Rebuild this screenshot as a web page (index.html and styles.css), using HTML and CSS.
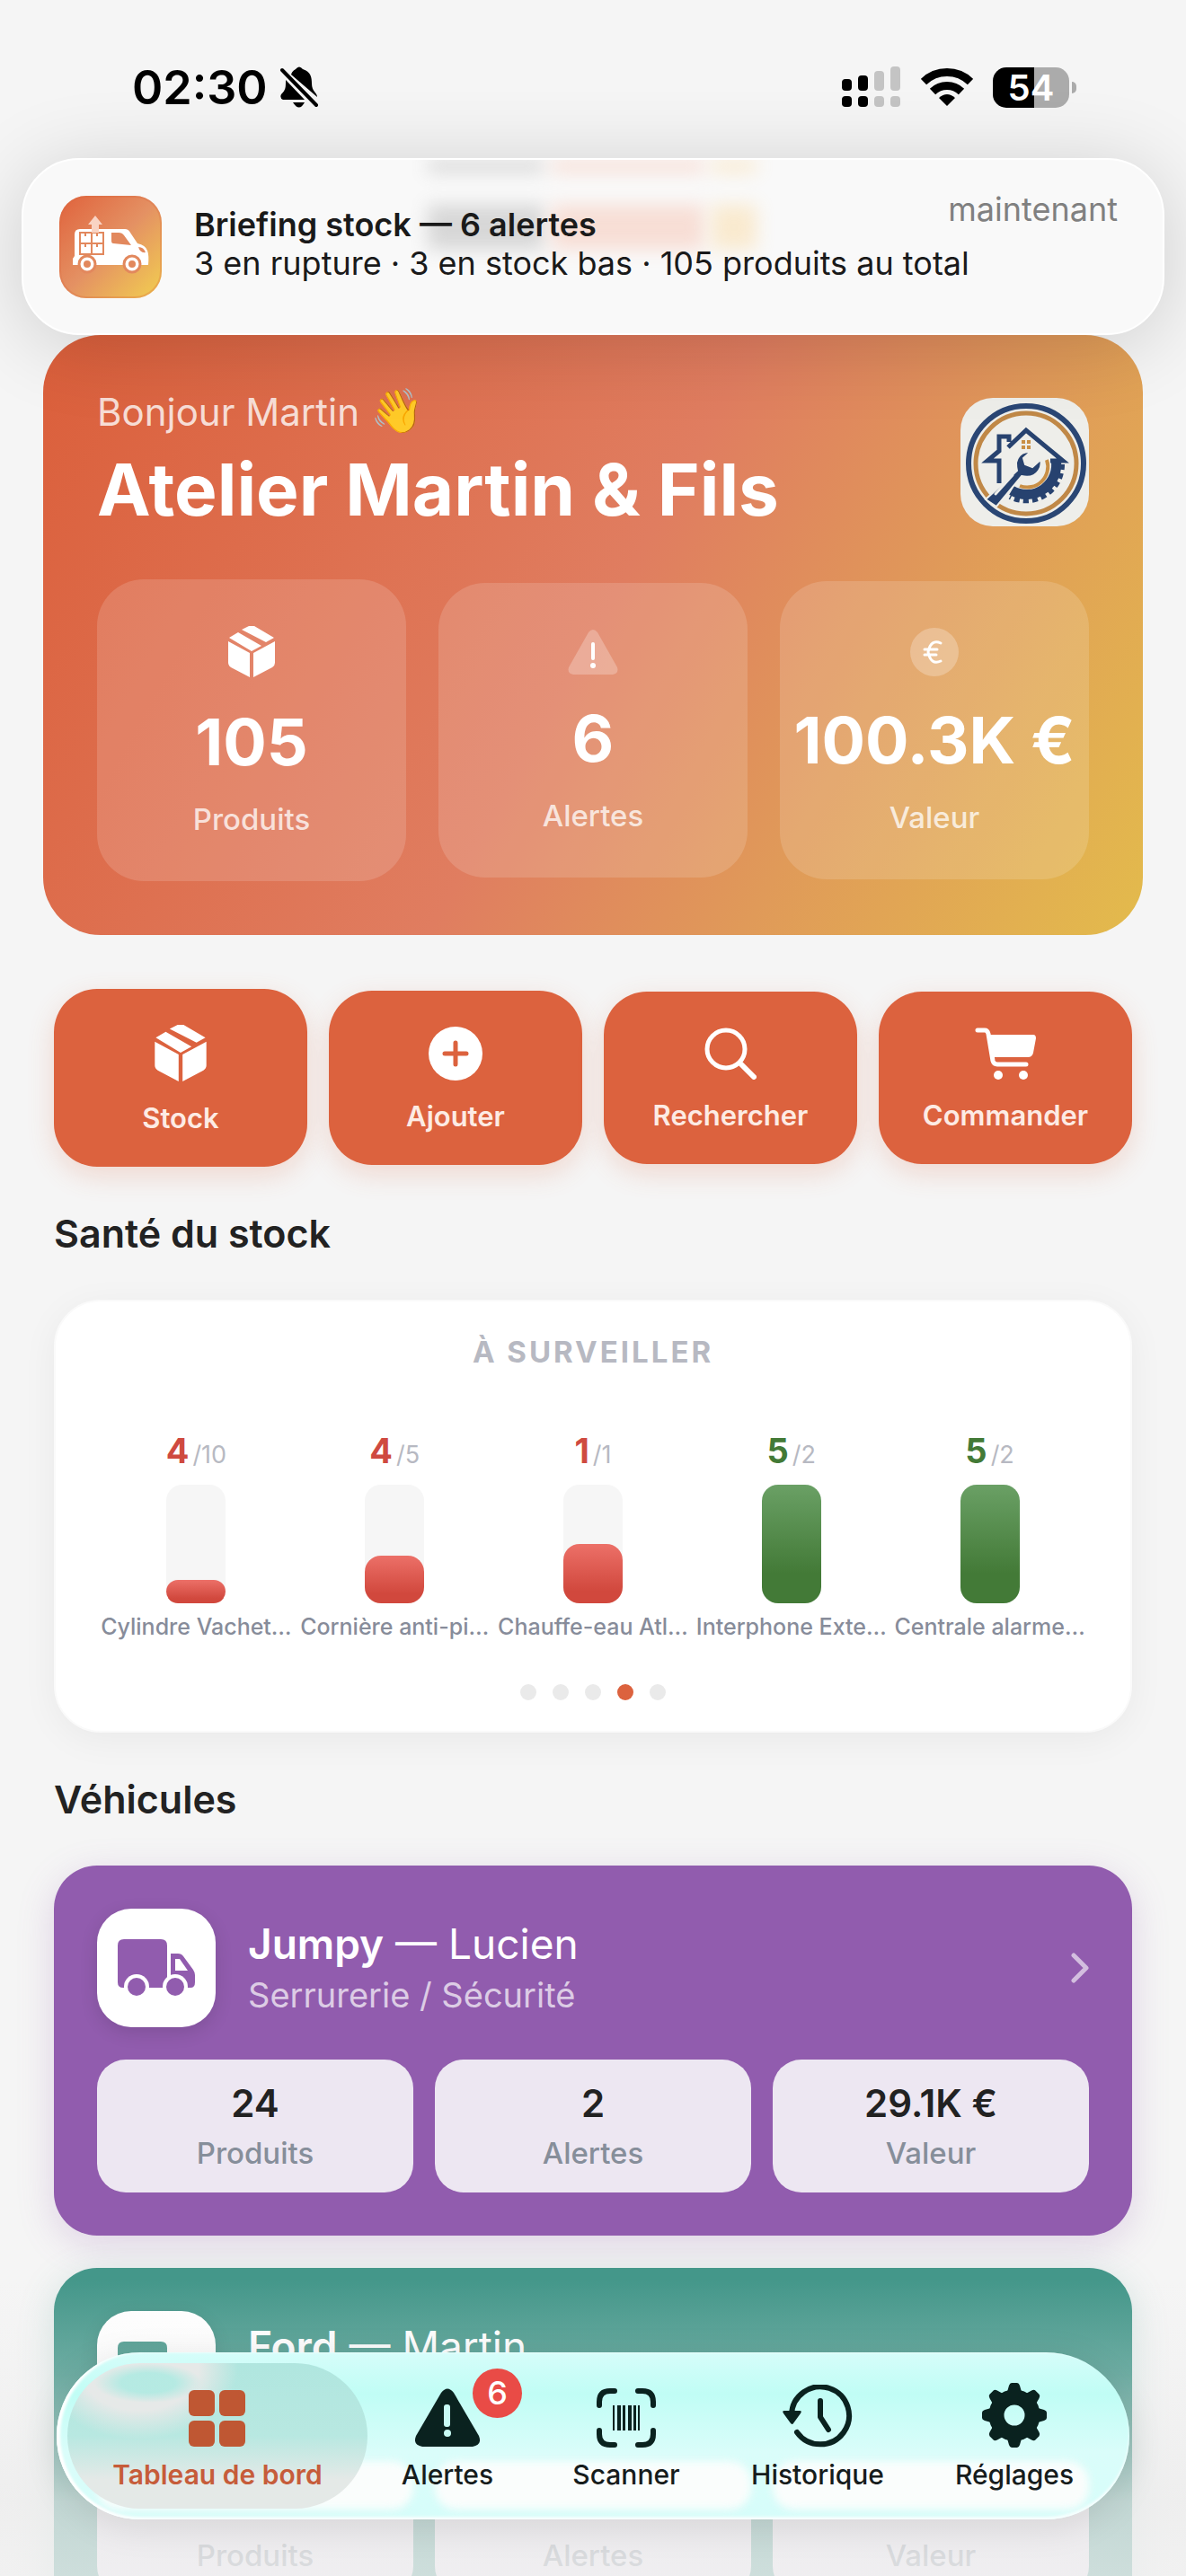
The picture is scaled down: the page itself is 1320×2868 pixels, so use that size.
FILE: index.html
```html
<!DOCTYPE html>
<html lang="fr">
<head>
    <meta charset="UTF-8">
    <meta name="viewport" content="width=device-width, initial-scale=1">
    <title>Tableau de bord</title>
    <link rel="stylesheet" href="styles.css">
</head>
<body>
<svg class="sprite" aria-hidden="true">
    <symbol id="box" viewBox="0 0 54 58">
        <path d="M1 17l24 13v27L4 46q-3-2-3-5zM53 17L29 30v27l21-11q3-2 3-5zM2 13l10-6 26 15-11 6zM16 4l8-4q3-1 6 0l22 13-9 5z"/>
    </symbol>
    <symbol id="truck" viewBox="0 0 86 64">
        <path d="M7 0h41q7 0 7 7v47H6q-6 0-6-6V7q0-7 7-7zM59 16h8q4 0 6 3l11 15q2 3 2 6v8q0 6-5 6H59z"/>
        <path class="cut" d="M64 22h5l9 13H64z"/>
        <circle class="cut" cx="21" cy="53" r="14"/>
        <circle class="cut" cx="64" cy="53" r="14"/>
        <circle cx="21" cy="53" r="10"/>
        <circle cx="64" cy="53" r="10"/>
    </symbol>
</svg>

<div id="app">
    <header class="status">
        <div class="status-left">
            <span class="clock">02:30</span>
            <svg width="42" height="46" viewBox="0 0 42 46">
                <path d="M12 9C14 4 16 4 17 3q4-5 8 0c9 3 10 9 10 16 0 9 6 10 6 15z"/>
                <path d="M6 15l21 22H3q-4-2-2-6c5-5 5-7 5-16zM14 40h13q-6 11-13 0z"/>
                <path class="slash" d="M2 4l38 39"/>
            </svg>
        </div>
        <div class="status-right">
            <svg width="66" height="46" viewBox="0 0 66 46">
                <path d="M4 14h3q4 0 4 4v5q0 4-4 4H4q-4 0-4-4v-5q0-4 4-4zM22 10h3q4 0 4 4v9q0 4-4 4h-3q-4 0-4-4v-9q0-4 4-4z"/>
                <rect y="33" width="11" height="12" rx="4"/>
                <rect x="18" y="33" width="11" height="12" rx="4"/>
                <g fill="#c4c4c4">
                    <rect x="36" y="5" width="11" height="22" rx="4"/>
                    <rect x="54" width="11" height="27" rx="4"/>
                    <rect x="36" y="33" width="11" height="12" rx="4"/>
                    <rect x="54" y="33" width="11" height="12" rx="4"/>
                </g>
            </svg>
            <svg width="58" height="44" viewBox="0 0 58 44">
                <g fill="none" stroke="#000" stroke-width="9">
                    <path d="M3 16a37.500 37.500 0 0 1 52 0"/>
                    <path d="M13 27a23 23 0 0 1 32 0"/>
                </g>
                <path d="M20 34q9-8 18 0l-9 9z"/>
            </svg>
            <div class="battery">54</div>
        </div>
    </header>

    <aside class="banner">
        <div class="ghost"><i></i><i></i><i></i><i></i><i></i><i></i></div>
        <svg width="114" height="114" viewBox="0 0 114 114">
            <defs>
                <linearGradient id="appBg" x1="0" y1="0" x2="1" y2="1">
                    <stop offset="0" stop-color="#e0623c"/>
                    <stop offset=".5" stop-color="#e49163"/>
                    <stop offset="1" stop-color="#f2cf50"/>
                </linearGradient>
            </defs>
            <rect width="114" height="114" rx="30" fill="url(#appBg)"/>
            <rect x="1" y="1" width="112" height="112" rx="29" fill="none" stroke="#d9693f" stroke-opacity=".3" stroke-width="2"/>
            <path fill="#fff" d="M23 37h50q4 0 6 4l8 12q9 2 11 8 2 5 1 16H15v-7l2-3V43q0-6 6-6z"/>
            <path fill="#e2885d" d="M58 41h8q4 0 6 3l8 11-20-2q-2 0-2-3zM88 57q6 0 8 6-6 1-8-6z"/>
            <path fill="none" stroke="#e2885d" stroke-width="2" d="M23 41h26v24H23zM36 41v24M23 53h26M29 41v4M42 41v4M29 53v4M42 53v4"/>
            <path fill="#f9d3c3" d="M40 22l8 10h-4v9h-8v-9h-4z"/>
            <g fill="#fff" stroke="#e2885d" stroke-width="3">
                <circle cx="31" cy="76" r="9"/>
                <circle cx="81" cy="76" r="9"/>
            </g>
            <circle cx="31" cy="76" r="4" fill="#e2885d"/>
            <circle cx="81" cy="76" r="4" fill="#e2885d"/>
        </svg>
        <div class="banner-text">
            <strong>Briefing stock — 6 alertes</strong>
            <span>3 en rupture · 3 en stock bas · 105 produits au total</span>
        </div>
        <time>maintenant</time>
    </aside>

    <main>
        <section class="hero">
            <div class="hero-head">
                <div>
                    <p>Bonjour Martin <span class="wave">👋</span></p>
                    <h1>Atelier Martin &amp; Fils</h1>
                </div>
                <svg width="143" height="143" viewBox="0 0 143 143">
                    <rect width="143" height="143" rx="36" fill="#eeeeea"/>
                    <circle cx="73" cy="73" r="64" fill="none" stroke="#2a4674" stroke-width="6"/>
                    <circle cx="73" cy="73" r="56" fill="none" stroke="#c08847" stroke-width="5"/>
                    <path fill="none" stroke="#c98f45" stroke-width="4" d="M96 69a23 23 0 0 1-30 29"/>
                    <path fill="none" stroke="#27426f" stroke-width="11" d="M106 68a33 33 0 0 1-49 35"/>
                    <path fill="none" stroke="#27426f" stroke-width="6" stroke-dasharray="6 4" d="M113 74a40 40 0 0 1-58 36"/>
                    <path fill="none" stroke="#27426f" stroke-width="5" d="M43 95V70H30l13-11V43h11v6M53 55l20-19 41 34h-14M43 59V43"/>
                    <path fill="#c98f45" d="M68 47h4v4h-4zM74 47h4v4h-4zM68 53h4v4h-4zM74 53h4v4h-4z"/>
                    <path fill="#27426f" stroke="#eeeeea" stroke-width="2" d="M78 60q-13-1-16 12 0 6 1 9L28 113l12 8 28-34q13 3 19-6 4-6 2-12l-9 8-8-3-2-7z"/>
                    <path stroke="#eeeeea" stroke-width="3" stroke-linecap="round" d="M39 107l19-21"/>
                </svg>
            </div>
            <div class="kpis">
                <div class="kpi">
                    <svg width="54" height="58"><use href="#box"/></svg>
                    <b>105</b>
                    <span>Produits</span>
                </div>
                <div class="kpi">
                    <svg width="56" height="50" viewBox="0 0 56 50">
                        <path class="soft" d="M23 3q5-6 10 0l22 39q2 7-5 8H6q-7-1-5-8z"/>
                        <rect x="26" y="14" width="4" height="20" rx="2"/>
                        <circle cx="28" cy="40" r="3"/>
                    </svg>
                    <b>6</b>
                    <span>Alertes</span>
                </div>
                <div class="kpi">
                    <svg width="54" height="54" viewBox="0 0 54 54">
                        <circle class="soft" cx="27" cy="27" r="27"/>
                        <path fill="none" stroke="#fff" stroke-width="3" stroke-linecap="round" d="M34 17q-11-5-14 10 3 15 14 10M16 24h14M16 30h13"/>
                    </svg>
                    <b>100.3K €</b>
                    <span>Valeur</span>
                </div>
            </div>
        </section>

        <div class="actions">
            <button type="button">
                <svg width="60" height="64"><use href="#box"/></svg>
                Stock
            </button>
            <button type="button">
                <svg width="60" height="60" viewBox="0 0 60 60">
                    <circle cx="30" cy="30" r="30"/>
                    <path stroke="#dc623e" stroke-width="5" stroke-linecap="round" d="M30 18v24M18 30h24"/>
                </svg>
                Ajouter
            </button>
            <button type="button">
                <svg width="58" height="58" viewBox="0 0 58 58">
                    <g fill="none" stroke="#fff" stroke-linecap="round">
                        <circle cx="24" cy="24" r="21" stroke-width="5"/>
                        <path stroke-width="6" d="M40 40l15 15"/>
                    </g>
                </svg>
                Rechercher
            </button>
            <button type="button">
                <svg width="68" height="58" viewBox="0 0 68 58">
                    <path d="M17 8h48q3 0 3 4l-3 16q-1 5-6 5H21z"/>
                    <path fill="none" stroke="#fff" stroke-width="5" stroke-linecap="round" stroke-linejoin="round" d="M3 3h8q3 0 4 4l5 30q1 4 5 4h32"/>
                    <circle cx="26" cy="53" r="5"/>
                    <circle cx="54" cy="53" r="5"/>
                </svg>
                Commander
            </button>
        </div>

        <h2>Santé du stock</h2>
        <section class="health">
            <h3>À SURVEILLER</h3>
            <div class="bars">
                <div class="bar low">
                    <p><b>4</b>/10</p>
                    <div class="track"><div style="height: 20%"></div></div>
                    <span>Cylindre Vachet…</span>
                </div>
                <div class="bar low">
                    <p><b>4</b>/5</p>
                    <div class="track"><div style="height: 40%"></div></div>
                    <span>Cornière anti-pi…</span>
                </div>
                <div class="bar low">
                    <p><b>1</b>/1</p>
                    <div class="track"><div style="height: 50%"></div></div>
                    <span>Chauffe-eau Atl…</span>
                </div>
                <div class="bar ok">
                    <p><b>5</b>/2</p>
                    <div class="track"><div style="height: 100%"></div></div>
                    <span>Interphone Exte…</span>
                </div>
                <div class="bar ok">
                    <p><b>5</b>/2</p>
                    <div class="track"><div style="height: 100%"></div></div>
                    <span>Centrale alarme…</span>
                </div>
            </div>
            <div class="dots"><i></i><i></i><i></i><i class="on"></i><i></i></div>
        </section>

        <h2>Véhicules</h2>
        <a href="#jumpy" class="vehicle purple">
            <div class="vehicle-head">
                <div class="vehicle-icon"><svg width="86" height="64"><use href="#truck"/></svg></div>
                <div class="vehicle-name">
                    <div><b>Jumpy</b> — Lucien</div>
                    <span>Serrurerie / Sécurité</span>
                </div>
                <svg class="chevron" width="20" height="34" viewBox="0 0 20 34"><path d="M3 3l14 14L3 31"/></svg>
            </div>
            <div class="vehicle-stats">
                <div><b>24</b><span>Produits</span></div>
                <div><b>2</b><span>Alertes</span></div>
                <div><b>29.1K €</b><span>Valeur</span></div>
            </div>
        </a>
        <a href="#ford" class="vehicle green">
            <div class="vehicle-head">
                <div class="vehicle-icon"><svg width="86" height="64"><use href="#truck"/></svg></div>
                <div class="vehicle-name">
                    <div><b>Ford</b> — Martin</div>
                </div>
            </div>
            <div class="vehicle-stats">
                <div><span>Produits</span></div>
                <div><span>Alertes</span></div>
                <div><span>Valeur</span></div>
            </div>
        </a>
    </main>

    <div class="fade"></div>
    <nav>
        <div class="glass"><i></i><i></i><i></i></div>
        <a href="#dashboard" class="active">
            <svg width="64" height="64" viewBox="0 0 64 64">
                <rect width="29" height="29" rx="6"/>
                <rect x="34" width="29" height="29" rx="6"/>
                <rect y="34" width="29" height="29" rx="6"/>
                <rect x="34" y="34" width="29" height="29" rx="6"/>
            </svg>
            Tableau de bord
        </a>
        <a href="#alertes">
            <svg width="72" height="66" viewBox="0 0 72 66">
                <path d="M29 5q7-9 14 0l28 48q4 10-7 12H8q-11-2-7-12z"/>
                <rect x="32" y="18" width="7" height="25" rx="3" fill="#c8fbf5"/>
                <circle cx="36" cy="50" r="4" fill="#c8fbf5"/>
            </svg>
            Alertes
            <em>6</em>
        </a>
        <a href="#scanner">
            <svg width="66" height="66" viewBox="0 0 66 66">
                <path class="line" d="M3 19v-4Q3 3 15 3h5M46 3h5q12 0 12 12v4M63 47v4q0 12-12 12h-5M20 63h-5Q3 63 3 51v-4"/>
                <path d="M18 19h2v28h-2zM23 19h4v28h-4zM29 19h3v28h-3zM35 19h4v28h-4zM41 19h3v28h-3zM46 19h2v28h-2z"/>
            </svg>
            Scanner
        </a>
        <a href="#historique">
            <svg width="78" height="70" viewBox="0 0 78 70">
                <path class="line" d="M10 34a32 32 0 1 1 6 19M42 18v18l9 14"/>
                <path d="M2 29h17q3 0 1 3l-8 11q-1 2-3 0L1 32q-2-3 1-3z"/>
            </svg>
            Historique
        </a>
        <a href="#reglages">
            <svg width="72" height="72" viewBox="-36 -36 72 72">
                <circle r="20" fill="none" stroke="#0a221f" stroke-width="17"/>
                <path id="tooth" d="M-8-26l2-7q1-3 3-3h6q2 0 3 3l2 7zM-8 26l2 7q1 3 3 3h6q2 0 3-3l2-7z"/>
                <use href="#tooth" transform="rotate(45)"/>
                <use href="#tooth" transform="rotate(90)"/>
                <use href="#tooth" transform="rotate(135)"/>
            </svg>
            Réglages
        </a>
    </nav>
</div>
</body>
</html>
```

FILE: styles.css
```css
* {
    box-sizing: border-box;
}

body {
    margin: 0;
    background: #f5f5f5;
    color: #222;
    font-family: Inter, "Liberation Sans", sans-serif;
}

h1, h2, h3, p {
    margin: 0;
}

a {
    color: inherit;
    text-decoration: none;
}

svg {
    display: block;
    flex-shrink: 0;
}

.sprite {
    display: none;
}

#app {
    position: relative;
    height: 100vh;
    overflow: hidden;
}

/* status bar */
.status {
    display: flex;
    justify-content: space-between;
    height: 176px;
    padding: 64px 130px 0 147px;
    color: #000;
}

.status-left, .status-right {
    display: flex;
    align-items: center;
    height: 66px;
}

.status-left {
    gap: 14px;
}

.status-right {
    gap: 22px;
}

.clock {
    font-size: 52px;
    font-weight: 600;
}

.slash {
    stroke: #000;
    stroke-width: 4;
    stroke-linecap: round;
}

.battery {
    position: relative;
    width: 85px;
    height: 45px;
    border-radius: 15px;
    background: linear-gradient(90deg, #000 54%, #ababab 54%);
    color: #fff;
    font-size: 40px;
    font-weight: 600;
    line-height: 45px;
    text-align: center;
}

.battery::after {
    content: "";
    position: absolute;
    right: -8px;
    top: 16px;
    width: 5px;
    height: 13px;
    border-radius: 0 6px 6px 0;
    background: #ababab;
}

/* notification */
.banner {
    position: relative;
    z-index: 2;
    display: flex;
    align-items: center;
    height: 197px;
    margin: 0 24px;
    padding: 0 50px 0 40px;
    border: 2px solid #fff;
    border-radius: 64px;
    background: #f9f9f9;
    box-shadow: 0 10px 90px rgba(0, 0, 0, .16);
}

.banner-text {
    position: relative;
    flex: 1;
    display: flex;
    flex-direction: column;
    margin: 0 0 6px 36px;
    color: #1a1a1a;
    font-size: 36px;
    line-height: 43px;
}

.banner-text strong {
    font-weight: 600;
}

.banner time {
    position: absolute;
    top: 34px;
    right: 50px;
    color: #808080;
    font-size: 36px;
    line-height: 43px;
}

.ghost {
    position: absolute;
    inset: 0 420px 2px;
    display: grid;
    grid-template: 14px 50px / 130px 170px 50px;
    gap: 36px 8px;
    padding: 0 30px;
    overflow: hidden;
    opacity: .3;
}

.ghost i {
    filter: blur(10px);
    background: #8a8a8a;
}

.ghost i:nth-child(3n+2) {
    background: #f5a184;
}

.ghost i:nth-child(3n) {
    background: #fbc870;
}

/* hero */
.hero {
    margin: 0 48px 60px;
    padding: 60px;
    border-radius: 64px;
    background: linear-gradient(119deg, #db5f3b 0%, #e07d60 50%, #e09a59 72%, #e3bb4c 100%);
    color: #fff;
}

.hero-head {
    display: flex;
    justify-content: space-between;
    align-items: center;
    margin-bottom: 50px;
}

.hero-head p {
    height: 50px;
    margin-bottom: 12px;
    color: rgba(255, 255, 255, .8);
    font-size: 42px;
    line-height: 50px;
}

.wave {
    color: #fff;
    font-size: 48px;
    line-height: 48px;
}

h1 {
    font-size: 80px;
    font-weight: 700;
    line-height: 100px;
}

.kpis {
    display: grid;
    grid-template-columns: repeat(3, 1fr);
    align-items: center;
    gap: 36px;
}

.kpi {
    display: flex;
    flex-direction: column;
    align-items: center;
    padding: 52px 0 48px;
    border-radius: 52px;
    background: rgba(255, 255, 255, .15);
    white-space: nowrap;
}

.kpi svg, .actions svg {
    fill: #fff;
}

.kpi .soft {
    fill: rgba(255, 255, 255, .25);
}

.kpi b {
    margin: 26px 0 20px;
    font-size: 72px;
    line-height: 90px;
}

.kpi span {
    color: rgba(255, 255, 255, .75);
    font-size: 33px;
    font-weight: 500;
    line-height: 42px;
}

/* quick actions */
.actions {
    display: grid;
    grid-template-columns: repeat(4, 1fr);
    align-items: center;
    gap: 24px;
    margin: 0 60px;
}

.actions button {
    display: flex;
    flex-direction: column;
    align-items: center;
    gap: 20px;
    padding: 40px 0 34px;
    border: 0;
    border-radius: 48px;
    background: #dc623e;
    box-shadow: 0 10px 30px rgba(220, 98, 62, .2);
    color: #fdebe4;
    font: 600 31px/40px Inter, "Liberation Sans", sans-serif;
}

h2 {
    margin: 49px 60px;
    font-size: 43px;
    font-weight: 600;
    line-height: 50px;
}

/* stock health */
.health {
    margin: 0 60px;
    padding: 36px 46px 34px;
    border: 2px solid #fafafa;
    border-radius: 52px;
    background: #fff;
    box-shadow: 0 8px 40px rgba(0, 0, 0, .05);
}

.health h3 {
    margin-bottom: 70px;
    color: #b7b9c2;
    font-size: 33px;
    font-weight: 700;
    letter-spacing: 3px;
    line-height: 40px;
    text-align: center;
}

.bars {
    display: grid;
    grid-template-columns: repeat(5, 1fr);
}

.bar {
    display: flex;
    flex-direction: column;
    align-items: center;
    white-space: nowrap;
}

.bar p {
    height: 44px;
    margin-bottom: 14px;
    color: #b7b9c2;
    font-size: 27px;
    line-height: 44px;
}

.bar b {
    margin-right: 4px;
    font-size: 38px;
    line-height: 40px;
}

.bar span {
    margin-top: 11px;
    color: #878c9a;
    font-size: 25px;
    font-weight: 500;
    line-height: 30px;
}

.track {
    display: flex;
    align-items: flex-end;
    width: 66px;
    height: 132px;
    border-radius: 18px;
    background: #f6f6f6;
}

.track div {
    width: 100%;
    border-radius: 18px;
}

.low .track div {
    background: linear-gradient(#ec7068, #d1483d 80%);
}

.ok .track div {
    background: linear-gradient(#6aa065, #437a37 75%);
}

.low b {
    color: #cf4a40;
}

.ok b {
    color: #437a37;
}

.dots {
    display: flex;
    justify-content: center;
    gap: 18px;
    margin-top: 49px;
}

.dots i {
    width: 18px;
    height: 18px;
    border-radius: 50%;
    background: #eaeaea;
}

.dots .on {
    background: #dc623e;
}

/* vehicles */
.vehicle {
    display: block;
    margin: 0 60px 36px;
    padding: 48px;
    border-radius: 48px;
    color: #fff;
}

.purple {
    background: #915cae;
    fill: #915cae;
    box-shadow: 0 10px 40px rgba(145, 92, 174, .22);
}

.green {
    background: #44978a;
    fill: #44978a;
    box-shadow: 0 10px 40px rgba(68, 151, 138, .22);
}

.vehicle-head {
    display: flex;
    align-items: center;
    height: 132px;
    margin-bottom: 36px;
}

.vehicle-icon {
    display: grid;
    place-items: center;
    width: 132px;
    height: 132px;
    border-radius: 38px;
    background: #fff;
    box-shadow: 0 6px 20px rgba(0, 0, 0, .12);
}

.cut {
    fill: #fff;
}

.vehicle-name {
    flex: 1;
    min-height: 114px;
    margin-left: 36px;
    font-size: 46px;
    line-height: 60px;
}

.vehicle-name b {
    font-weight: 600;
}

.vehicle-name span {
    display: block;
    color: rgba(255, 255, 255, .7);
    font-size: 38px;
    line-height: 54px;
}

.chevron {
    fill: none;
    stroke: rgba(255, 255, 255, .6);
    stroke-width: 5;
    stroke-linecap: round;
    stroke-linejoin: round;
}

.vehicle-stats {
    display: grid;
    grid-template-columns: repeat(3, 1fr);
    gap: 24px;
}

.vehicle-stats div {
    display: flex;
    flex-direction: column;
    justify-content: flex-end;
    align-items: center;
    gap: 8px;
    height: 148px;
    padding-bottom: 22px;
    border-radius: 32px;
    background: #ede7f2;
}

.vehicle-stats b {
    color: #222;
    font-size: 42px;
    font-weight: 600;
    line-height: 50px;
}

.vehicle-stats span {
    color: #868e9a;
    font-size: 33px;
    font-weight: 500;
    line-height: 44px;
}

/* bottom bar */
.fade {
    position: absolute;
    inset: auto 0 0;
    height: 330px;
    background: linear-gradient(rgba(236, 236, 236, 0), rgba(236, 236, 236, .25) 32%, rgba(236, 236, 236, .75) 75%, rgba(240, 240, 240, .8));
}

nav {
    position: absolute;
    inset: auto 63px 63px;
    display: grid;
    grid-template-columns: 334fr 178fr 220fr 206fr 232fr;
    height: 186px;
    padding: 12px;
    border-radius: 93px;
    background: linear-gradient(#d6fdfa, #c0fdf5 25%, #dafdfa 60%, #d6fdfa);
    box-shadow: inset 4px 0 3px #fff, inset 0 -3px 3px rgba(255, 255, 255, .8), 0 8px 40px rgba(0, 0, 0, .1);
}

.glass {
    position: absolute;
    inset: 121px 45px 11px;
    display: grid;
    grid-template-columns: repeat(3, 1fr);
    gap: 24px;
}

.glass i {
    border-radius: 24px;
    background: #fafdfc;
    filter: blur(5px);
}

nav a {
    position: relative;
    display: flex;
    flex-direction: column;
    align-items: center;
    justify-content: flex-end;
    gap: 12px;
    height: 162px;
    padding-bottom: 20px;
    border-radius: 81px;
    fill: #0a221f;
    color: #161c1c;
    font-size: 30px;
    font-weight: 500;
    line-height: 36px;
    white-space: nowrap;
}

nav .active {
    background:
        radial-gradient(ellipse 60px 22px at 90px 22px, rgba(176, 234, 226, .9) 50%, transparent),
        radial-gradient(ellipse 110px 80px at 80px 5px, #e6e9e8 60%, transparent),
        linear-gradient(#b0e6df, #b8e8e1 50%, #e4e9e7 80%);
    fill: #bf5733;
    color: #c65c3a;
    font-weight: 600;
}

nav .line {
    fill: none;
    stroke: #0a221f;
    stroke-width: 6;
    stroke-linecap: round;
    stroke-linejoin: round;
}

nav em {
    position: absolute;
    top: 6px;
    left: 50%;
    width: 55px;
    height: 55px;
    margin-left: 28px;
    border-radius: 50%;
    background: #e94b46;
    color: #fff;
    font-size: 36px;
    font-style: normal;
    line-height: 55px;
    text-align: center;
}
```
